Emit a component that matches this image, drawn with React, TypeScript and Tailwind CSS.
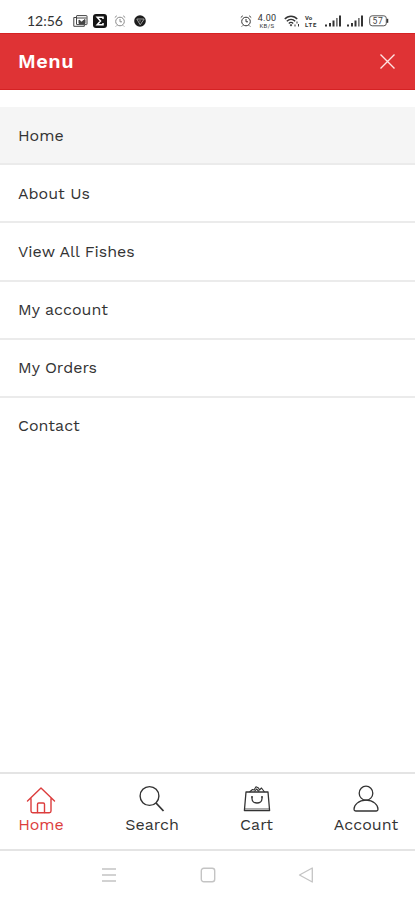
const menuItems = ['Home', 'About Us', 'View All Fishes', 'My account', 'My Orders', 'Contact'];

function AlarmIcon({ className }: { className?: string }) {
    return (
        <svg className={className} width="12" height="12" viewBox="0 0 12 12" fill="none" stroke="currentColor">
            <circle cx="6" cy="6.5" r="4.3" />
            <path d="M.8 2.5 2.8.8M11.2 2.5 9.2.8M6 4v2.8h2M2.8 10.5l-1 1M9.2 10.5l1 1" />
        </svg>
    );
}

function Signal() {
    return (
        <svg width="17" height="12" viewBox="0 0 17 12" fill="#333">
            <rect x="0" y="9.5" width="2" height="2" />
            <rect x="4" y="8" width="2" height="3.5" />
            <rect x="7.5" y="5.5" width="2" height="6" />
            <rect x="11" y="3" width="1.7" height="8.5" fill="#777" />
            <rect x="14" y="0.5" width="2" height="11" />
        </svg>
    );
}

function StatusBar() {
    return (
        <div className="flex h-[33px] items-center pt-[9px] pl-[27px] text-[#333]">
            <span className="w-[46px] font-['Lato',sans-serif] text-[14px] leading-6 whitespace-nowrap">12:56</span>
            <svg width="15" height="12" viewBox="0 0 15 12" fill="none" stroke="#444">
                <path d="M3 2.5H.8v8.8h10.5V10" />
                <rect x="3.5" y=".6" width="10.5" height="9" rx=".5" />
                <path d="M4 3h9.5M6 5l2.5 2L12 4.5v4H6z" fill="#444" />
            </svg>
            <svg className="ml-[5px]" width="14" height="14" viewBox="0 0 14 14">
                <rect width="14" height="14" rx="3" fill="#151515" />
                <path d="M10 5V3.3H4.2L7.5 7l-3.3 3.7H10V9" fill="none" stroke="#fff" strokeWidth="1.5" />
            </svg>
            <AlarmIcon className="ml-[7px] text-[#888]" />
            <svg className="ml-[8px]" width="12" height="12" viewBox="0 0 12 12">
                <circle cx="6" cy="6" r="5.8" fill="#1c1c1c" />
                <path d="M2.8 4h7.4L6.2 9.8z" fill="none" stroke="#aaa" strokeWidth=".9" />
                <circle cx="6" cy="5.8" r="1.2" fill="#555" />
            </svg>
            <AlarmIcon className="ml-[94px]" />
            <div className="ml-[5px] flex w-[20px] flex-col items-center font-['Roboto',sans-serif] whitespace-nowrap">
                <span className="text-[9px] leading-[8px] tracking-[0.3px]">4.00</span>
                <span className="text-[6px] leading-[7px] tracking-[0.4px]">KB/S</span>
            </div>
            <svg className="ml-[7px]" width="16" height="12" viewBox="0 0 16 12" fill="none" stroke="#333" strokeWidth="1.4">
                <path d="M.8 4C4 .3 10 .3 13.2 4M2.8 6.2c2.5-2.5 6-2.5 8.4 0M4.8 8.4c1.4-1.3 3-1.3 4.4 0" />
                <path d="m7 9-1.3 1L7 11.5 8.3 10z" fill="#333" stroke="none" />
                <path d="M13 6.5v2M11 9.5v2M14.5 9v2.5" strokeWidth="1" />
            </svg>
            <div className="ml-[5px] flex w-[15px] flex-col font-['Roboto',sans-serif] font-bold whitespace-nowrap">
                <span className="text-[6px] leading-[7px]">Vo</span>
                <span className="text-[6px] leading-[7px] tracking-[0.8px]">LTE</span>
            </div>
            <div className="ml-[5px] flex gap-[5px]">
                <Signal />
                <Signal />
            </div>
            <svg className="ml-[5px]" width="20" height="12" viewBox="0 0 20 12">
                <rect x=".7" y=".8" width="16.6" height="10" rx="2.5" fill="none" stroke="#555" />
                <path d="M18.5 3.8v4" stroke="#333" strokeWidth="1.5" />
                <text x="9" y="8.9" textAnchor="middle" fontFamily="Roboto" fontSize="8.5" letterSpacing=".6" fill="#444">57</text>
            </svg>
        </div>
    );
}

function BottomNav() {
    return (
        <nav className="flex h-[79px] justify-between border-t-2 border-b-2 border-[#e4e4e4] pr-[17px] pl-[18px] pt-[11px] text-[16px] leading-5 text-[#333]">
            <div className="flex w-[46px] flex-col items-center pt-px text-[#dc3d3d]">
                <svg width="30" height="28" viewBox="0 0 30 28" fill="none" stroke="currentColor" strokeWidth="1.4" strokeLinejoin="round" strokeLinecap="round">
                    <path d="M1.5 15 15 2l13.5 13M5 12.5V25c0 1 .6 1.7 1.7 1.7h16.6c1.1 0 1.7-.7 1.7-1.7V12.5" />
                    <path d="M11.5 26.5v-8.3c0-.7.4-1.2 1.2-1.2h4.6c.8 0 1.2.5 1.2 1.2v8.3" />
                </svg>
                <span className="mt-px whitespace-nowrap">Home</span>
            </div>
            <div className="flex w-[54px] flex-col items-center">
                <svg width="28" height="28" viewBox="0 0 28 28" fill="none" stroke="currentColor" strokeWidth="1.4">
                    <circle cx="11.5" cy="11" r="9.4" />
                    <path d="m18 18 7.5 8" strokeWidth="1.8" />
                </svg>
                <span className="mt-[2px] whitespace-nowrap">Search</span>
            </div>
            <div className="flex w-[33px] flex-col items-center">
                <svg width="28" height="28" viewBox="0 0 28 28" fill="none" stroke="currentColor" strokeWidth="1.3" strokeLinejoin="round">
                    <path d="M3 7h22l1.6 18.5H1.4z" />
                    <path d="M2 23.8h24" strokeWidth=".6" />
                    <path d="m6.5 7 3-2.5 1.5.5 2-3.3 2.5 1.3 1 2 2-2 3 4M11.5 6.5l2-2.5 2.5 2.5" strokeWidth="1.1" />
                    <path d="M9 11.5v2c0 6 10 6 10 0v-2M8 11.8h2M18 11.8h2" />
                </svg>
                <span className="mt-[2px] whitespace-nowrap">Cart</span>
            </div>
            <div className="flex w-[64px] flex-col items-center">
                <svg width="28" height="28" viewBox="0 0 28 28" fill="none" stroke="currentColor" strokeWidth="1.3">
                    <ellipse cx="14" cy="8.2" rx="6.8" ry="7" />
                    <path d="M14 15.2C6.5 15.2 2 20 2 24.2c0 1.3.6 1.8 1.7 1.8h20.6c1.1 0 1.7-.5 1.7-1.8 0-4.2-4.5-9-12-9" />
                </svg>
                <span className="mt-[2px] whitespace-nowrap">Account</span>
            </div>
        </nav>
    );
}

export default function App() {
    return (
        <div className="flex h-[900px] w-[415px] flex-col bg-white font-['Work_Sans','Inter',sans-serif]">
            <StatusBar />
            <header className="flex h-[57px] items-center justify-between border-t border-b border-[#d52224] bg-[#df3335] pr-[19px] pl-[18px] text-white">
                <h1 className="pb-px text-[20px] font-semibold tracking-[0.5px]">Menu</h1>
                <svg width="17" height="17" viewBox="0 0 17 17" fill="none" stroke="#ffe4e4" strokeWidth="1.4">
                    <path d="m1.5 1.5 14 14M15.5 1.5l-14 14" />
                </svg>
            </header>

            <ul className="mt-[17px] flex-1 text-[16px] text-[#333]">
                {menuItems.map((label, i) => (
                    <li
                        key={label}
                        className={`flex h-[58.18px] items-center border-b-2 pt-px pl-[18px] ${i === 0 ? 'bg-[#f5f5f5]' : ''} ${i === menuItems.length - 1 ? 'border-transparent' : 'border-[#ebebeb]'}`}
                    >
                        {label}
                    </li>
                ))}
            </ul>

            <BottomNav />

            {/* Android navigation keys */}
            <div className="flex h-[49px] items-center justify-between pb-[2px] pr-[101px] pl-[101px] text-[#c4c4c4]">
                <svg width="16" height="16" viewBox="0 0 16 16" stroke="currentColor" strokeWidth="1.4">
                    <path d="M1 2h14M1 8h14M1 14h14" />
                </svg>
                <svg width="16" height="16" viewBox="0 0 16 16" fill="none" stroke="currentColor" strokeWidth="1.4">
                    <rect x="1.3" y="1.3" width="13.4" height="13.4" rx="2.5" />
                </svg>
                <svg width="16" height="16" viewBox="0 0 16 16" fill="none" stroke="currentColor" strokeWidth="1.3" strokeLinejoin="round">
                    <path d="M14.3 1v14L1.5 8z" />
                </svg>
            </div>
        </div>
    );
}
